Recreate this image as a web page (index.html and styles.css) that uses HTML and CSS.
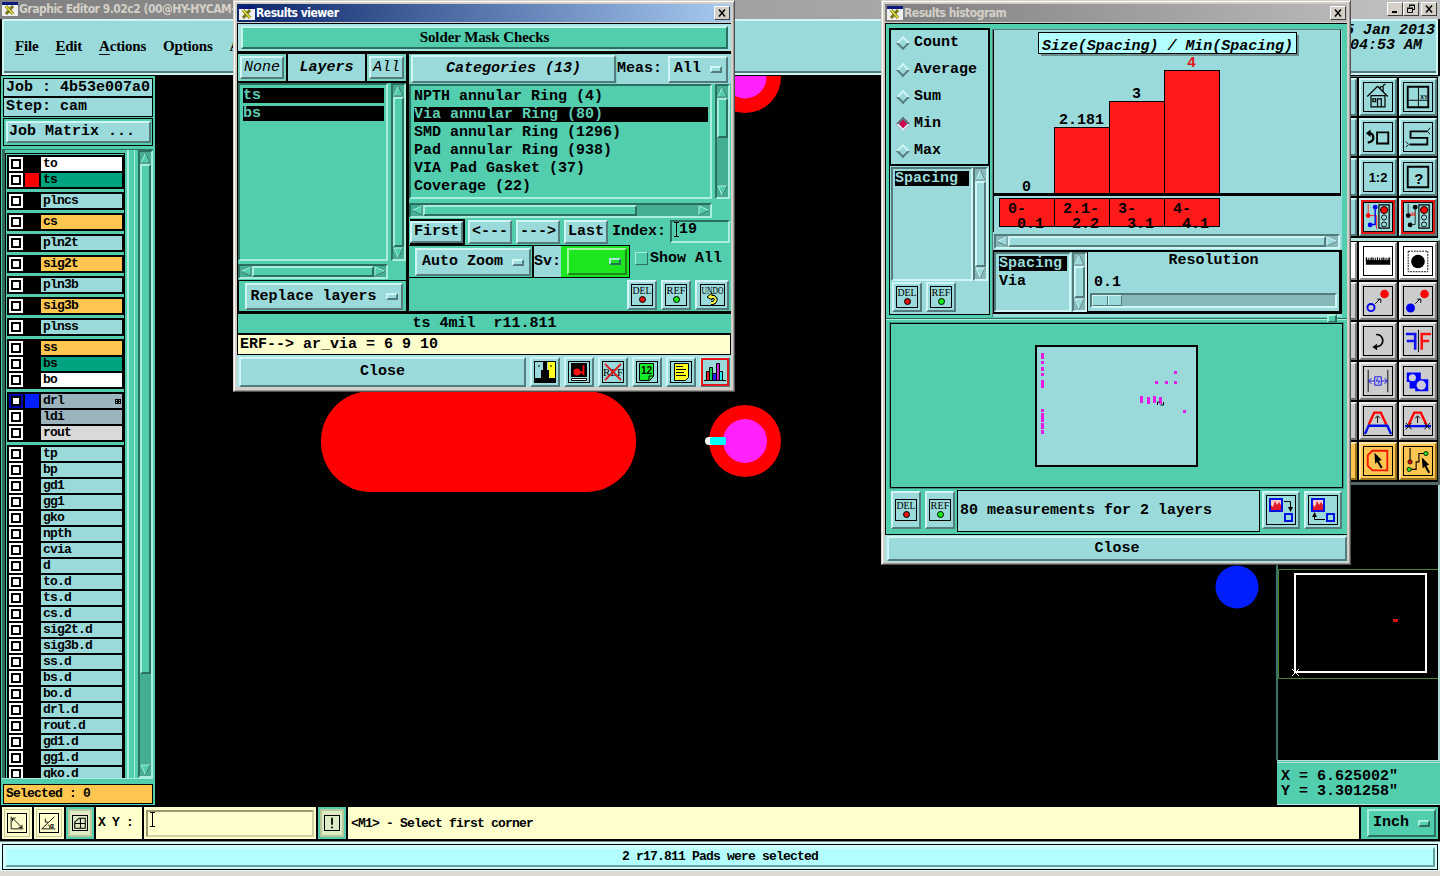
FILE: index.html
```html
<!DOCTYPE html>
<html lang="en">
  <head>
    <meta charset="UTF-8" />
    <meta name="viewport" content="width=device-width, initial-scale=1.0" />
    <title>Graphic Editor</title>
    <link rel="stylesheet" href="styles.css">
  </head>
  <body>
    <svg class="defs">
      <symbol id="app" viewBox="0 0 16 14">
        <rect width="16" height="14" fill="#eee" />
        <rect width="16" height="3" fill="#0a1a80" />
        <path d="M4 4l7 8M11 4l-7 8" stroke="#77771a" stroke-width="3" />
        <path d="M4 4l7 8" stroke="#e6e03c" stroke-width="1.5" />
      </symbol>
      <symbol id="cursor" viewBox="0 0 9 17">
        <path d="M0 0l8 8-3 1 4 7-2 1-4-7-2 2z" />
      </symbol>
    </svg>

    <div class="app">
      <div class="titlebar main-title">
        <svg class="app-icon"><use href="#app" /></svg>
        <span>Graphic Editor 9.02c2 (00@HY-HYCAM-</span>
        <div class="win-buttons">
          <i class="win-btn"><svg viewBox="0 0 12 10"><path d="M3 8h5" stroke="#000" stroke-width="2" /></svg></i>
          <i class="win-btn"><svg viewBox="0 0 12 10"><path d="M4.500 3V1.500h5v4H8M2.500 4.500h5v4h-5zM4 1h6M2 4h6" fill="none" stroke="#000" /></svg></i>
          <i class="win-btn gap"><svg viewBox="0 0 12 10"><path d="M3 1.500l6 7M9 1.500l-6 7" stroke="#000" stroke-width="1.500" /></svg></i>
        </div>
      </div>

      <div class="menubar">
        <nav>
          <span><u>F</u>ile</span>
          <span><u>E</u>dit</span>
          <span><u>A</u>ctions</span>
          <span>O<u>p</u>tions</span>
          <span>A</span>
        </nav>
        <div class="clock"><span>5 Jan 2013</span><span>04:53 AM&nbsp;</span></div>
      </div>

      <div class="main">
        <aside class="side">
          <div class="job-line">Job : 4b53e007a0</div>
          <div class="job-line step">Step: cam</div>
          <div class="matrix"><button class="btn">Job Matrix ...</button></div>
          <div class="layers">
            <div class="layer-list" id="layerList"></div>
            <div class="layer-rim"></div>
            <div class="vscroll">
              <svg class="arr" viewBox="0 0 11 12"><path d="M5.500 1L1 11h9z" fill="#52cdae" stroke="#a9eedd" /><path d="M5.500 1L10 11H1" fill="none" stroke="#2b705f" /></svg>
              <div class="thumb long"></div>
              <svg class="arr end" viewBox="0 0 11 12"><path d="M5.500 11L1 1h9z" fill="#52cdae" stroke="#a9eedd" /><path d="M10 1L5.500 11" stroke="#2b705f" /></svg>
            </div>
          </div>
          <div class="selected">Selected : 0</div>
        </aside>

        <div class="board">
          <svg viewBox="155 76 1121 730">
            <rect x="321" y="391" width="315" height="101" rx="50" fill="#f00" />
            <circle cx="745" cy="77" r="36" fill="#f00" />
            <circle cx="745" cy="77" r="21.500" fill="#f2f" />
            <circle cx="745" cy="441" r="36" fill="#f00" />
            <circle cx="745" cy="441" r="22" fill="#f2f" />
            <rect x="705" y="437" width="12" height="8" rx="4" fill="#fff" />
            <rect x="710" y="437" width="16" height="8" rx="2" fill="#0ff" />
            <circle cx="1237" cy="587" r="21.500" fill="#001eff" />
          </svg>
        </div>

        <aside class="tools">
          <div class="toolgrid">
            <div class="tool"></div>
            <div class="tool"><svg viewBox="0 0 30 30"><path d="M3.500 14.500l11-11 11 11M7.500 14v11.500h15V14M7 13.500h16M9.500 17h3v3h-3zM14.500 25v-8h4v8M17.500 6V4h3v6M20 3l3-2" fill="none" stroke="#000" stroke-width="1.300" /></svg></div>
            <div class="tool"><svg viewBox="0 0 30 30"><path d="M4 4h22v22H4z" fill="none" stroke="#000" stroke-width="2" /><path d="M15.500 4v22M4 18.500h22" stroke="#000" /><text x="17.500" y="17" font-size="6" class="sans">XY</text></svg></div>
            <div class="tool"></div>
            <div class="tool"><svg viewBox="0 0 30 30"><path d="M14 10h12v12H14z" fill="none" stroke="#000" stroke-width="2" /><path d="M5 11h2q3 1 3 5t-6 5" fill="none" stroke="#000" stroke-width="2.400" /><path d="M2 11l5-4v8z" /></svg></div>
            <div class="tool"><svg viewBox="0 0 30 30"><path d="M25 9H7v7h18v7H6" fill="none" stroke="#000" stroke-width="2" /><path d="M28 5l-3 4 3 3M2 20l3 3-3 3" fill="none" stroke="#000" /></svg></div>
            <div class="tool"></div>
            <div class="tool"><svg viewBox="0 0 30 30"><text x="5" y="20" font-size="14" font-weight="bold" textLength="20" lengthAdjust="spacingAndGlyphs" class="sans">1:2</text></svg></div>
            <div class="tool"><svg viewBox="0 0 30 30"><path d="M4 4h22v22H4z" fill="none" stroke="#000" stroke-width="2" /><text x="11" y="22" font-size="16" font-weight="bold" class="sans">?</text></svg></div>
            <div class="tool"></div>
            <div class="tool on"><svg viewBox="0 0 30 30"><path d="M4.500 1v12.500h9V28" fill="none" stroke="#f22" /><path d="M12 4v19H6" fill="none" stroke="#00e" stroke-width="1.500" /><circle cx="4.500" cy="13.500" r="2.500" fill="#f00" /><circle cx="12" cy="4.500" r="2.500" fill="#00e" /><circle cx="6.500" cy="23.500" r="2.500" fill="#00e" /><path d="M16 2h11v25H16z" fill="none" stroke="#000" stroke-width="1.300" /><circle cx="21.500" cy="7.500" r="3.800" fill="#f00" stroke="#000" /><circle cx="21.500" cy="15.500" r="2.700" fill="none" stroke="#000" /><circle cx="21.500" cy="23" r="2.700" fill="none" stroke="#000" /></svg></div>
            <div class="tool on"><svg viewBox="0 0 30 30"><path d="M4.500 1v12.500h3M12 4v19H6" fill="none" stroke="#222" /><path d="M7 13h5M7.500 10v3M9.500 10v3M11.500 10v3" stroke="#f22" /><circle cx="4.500" cy="13.500" r="2.500" /><circle cx="12" cy="4.500" r="2.500" /><circle cx="6.500" cy="23.500" r="2.500" /><path d="M16 2h11v25H16z" fill="none" stroke="#000" stroke-width="1.300" /><circle cx="21.500" cy="7.500" r="3.800" fill="#f00" stroke="#000" /><circle cx="21.500" cy="15.500" r="2.700" fill="none" stroke="#000" /><circle cx="21.500" cy="23" r="2.700" fill="none" stroke="#000" /></svg></div>
          </div>
          <div class="toolgrid second">
            <div class="tool white"></div>
            <div class="tool white"><svg viewBox="0 0 30 30"><path d="M2 14h26v5H2z" /><path d="M2 13h26" stroke="#000" stroke-width="3" stroke-dasharray="1 1" /><path d="M2.500 11v4M8.500 11v4M14.500 11v4M20.500 11v4M27.500 11v8" stroke="#000" /></svg></div>
            <div class="tool white"><svg viewBox="0 0 30 30"><rect x="4.500" y="4.500" width="21" height="22" fill="none" stroke="#000" stroke-dasharray="2 1" /><circle cx="15" cy="15.500" r="7.300" /></svg></div>
            <div class="tool gray"></div>
            <div class="tool gray"><svg viewBox="0 0 30 30"><circle cx="22" cy="7.500" r="4.600" fill="#f00" /><circle cx="7.500" cy="22" r="3.800" fill="none" stroke="#00e" stroke-width="2" /><path d="M12 18l5-5M14 13h4v4" fill="none" stroke="#000" /></svg></div>
            <div class="tool gray"><svg viewBox="0 0 30 30"><circle cx="22" cy="7.500" r="4.600" fill="#f00" /><circle cx="7" cy="22.500" r="4.800" fill="#00e" /><path d="M12 18l5-5M14 13h4v4" fill="none" stroke="#000" /></svg></div>
            <div class="tool gray"></div>
            <div class="tool gray"><svg viewBox="0 0 30 30"><path d="M13 8c8 0 9 9 4 12l-5 2" fill="none" stroke="#000" stroke-width="1.800" /><path d="M9 21.500l5-3.500v7z" /></svg></div>
            <div class="tool gray"><svg viewBox="0 0 30 30"><path d="M2 7.500h10v17M3 15h8" fill="none" stroke="#1010f0" stroke-width="2.800" /><path d="M15.500 3v24" stroke="#000" /><path d="M29 7.500h-10v17M18 15h9" fill="none" stroke="#f11" stroke-width="2.800" /></svg></div>
            <div class="tool gray"></div>
            <div class="tool gray"><svg viewBox="0 0 30 30"><path d="M4.500 3v24M25.500 3v24" stroke="#000" /><path d="M11.500 10.500h7v9h-7zM5 15h6M19 15h6M8 12l-3 3 3 3M22 12l3 3-3 3M15 12l-2 3h4l-2 3" fill="none" stroke="#1010f0" /></svg></div>
            <div class="tool gray"><svg viewBox="0 0 30 30"><path d="M3 6h15v7h8v13H12v-3H6v-7H3z" fill="#00f" /><circle cx="9" cy="11.500" r="3.800" fill="#ccd" /><circle cx="18.500" cy="19.500" r="5" fill="#ccd" /></svg></div>
            <div class="tool gray"></div>
            <div class="tool gray"><svg viewBox="0 0 30 30"><path d="M5 19L11 6h7l6 13" fill="none" stroke="#f00" stroke-width="2.600" /><path d="M1 29l4-9h20l4 9" fill="none" stroke="#0010e8" stroke-width="2.600" /><path d="M14.500 17v-7M12 12l2.500-2.500L17 12" fill="none" stroke="#000" /></svg></div>
            <div class="tool gray"><svg viewBox="0 0 30 30"><path d="M5 19L11 6h7l6 13" fill="none" stroke="#f00" stroke-width="2.600" /><path d="M1 20.500h28" stroke="#0010e8" stroke-width="2.600" /><path d="M14.500 17v-7M12 12l2.500-2.500L17 12M2 17l6 7M8 17l-6 7M22 17l6 7M28 17l-6 7" fill="none" stroke="#000" /></svg></div>
            <div class="tool orange"></div>
            <div class="tool orange"><svg viewBox="0 0 30 30"><path d="M9 4h16v21H9l-5-5V9z" fill="none" stroke="#f01800" stroke-width="2" /><use href="#cursor" x="11" y="6" width="9" height="17" /></svg></div>
            <div class="tool orange"><svg viewBox="0 0 30 30"><path d="M6.500 1v14M5 24h8v-8h3V7h6" fill="none" stroke="#000" stroke-width="1.200" /><circle cx="6.500" cy="16" r="2.300" fill="#d01010" stroke="#000" stroke-width=".8" /><circle cx="23.500" cy="7" r="2.300" fill="#1ee01e" stroke="#000" stroke-width=".8" /><circle cx="5.500" cy="24" r="2.300" fill="#1ee01e" stroke="#000" stroke-width=".8" /><use href="#cursor" x="19" y="11" width="9" height="17" /></svg></div>
          </div>
          <svg class="overview" viewBox="1276 485 164 275">
            <path d="M1277 485v275" stroke="#39756a" stroke-width="2" />
            <path d="M1438 569.500h-159.500v109H1438" fill="none" stroke="#47852a" />
            <rect x="1295" y="574" width="131" height="98" fill="none" stroke="#fff" stroke-width="2" />
            <path d="M1292 669l7 7M1299 669l-7 7" stroke="#fff" />
            <rect x="1393" y="619" width="5" height="3" fill="#d01414" />
            <path d="M1439 485v275" stroke="#a9d9d2" stroke-width="2" />
          </svg>
          <div class="coords"><span>X = 6.625002"</span><span>Y = 3.301258"</span></div>
        </aside>
      </div>

      <div class="command">
        <div class="cmd-btn"><svg viewBox="0 0 20 20"><path d="M3.500 3v13.500H17M5 4.500l10.500 10.500M5 8V4.500h3.500M15.500 12v3H12" fill="none" stroke="#000" /></svg></div>
        <div class="cmd-btn"><svg viewBox="0 0 20 20"><path d="M2 16.500L16 3M2 16.500h15M6 5v4h3M9 12q3 1 2 4" fill="none" stroke="#000" /><text x="11" y="15" font-size="7" font-weight="bold">α</text></svg></div>
        <div class="cmd-btn green"><svg viewBox="0 0 16 16"><path d="M2 7l5-4.500h7V14H2zM8.500 2v12M2 8.500h12" fill="none" stroke="#000" stroke-width="1.200" /></svg></div>
        <div class="xy">X Y :</div>
        <div class="entry"><div><svg class="ibeam" viewBox="0 0 5 15"><path d="M0 .5h5M2.500 0v15M0 14.500h5" stroke="#000" /></svg></div></div>
        <div class="cmd-btn green"><svg viewBox="0 0 16 16"><path d="M8 2v8M8 12v2" stroke="#000" stroke-width="2" /></svg></div>
        <div class="prompt">&lt;M1&gt; - Select first corner</div>
        <div class="units"><button class="btn teal">Inch<i class="opt"></i></button></div>
      </div>
      <div class="message"><div><span>2 r17.811 Pads were selected</span></div></div>
    </div>

    <div class="window viewer">
      <div class="titlebar active">
        <svg class="app-icon"><use href="#app" /></svg><span>Results viewer</span>
        <i class="win-btn gap"><svg viewBox="0 0 12 10"><path d="M3 1.500l6 7M9 1.500l-6 7" stroke="#000" stroke-width="1.500" /></svg></i>
      </div>
      <div class="viewer-head"><div>Solder Mask Checks</div></div>
      <div class="viewer-body">
        <div class="viewer-left">
          <div class="pick-row">
            <div class="pick"><button class="btn it thin">None</button></div>
            <div class="pick-title">Layers</div>
            <div class="pick"><button class="btn it thin">All</button></div>
          </div>
          <div class="list-area">
            <div class="list layers-picked"><div class="sel">ts</div><div class="sel">bs</div></div>
            <div class="vscroll">
              <svg class="arr" viewBox="0 0 11 12"><path d="M5.500 1L1 11h9z" fill="#52cdae" stroke="#a9eedd" /><path d="M5.500 1L10 11H1" fill="none" stroke="#2b705f" /></svg>
              <div class="thumb"></div>
              <svg class="arr end" viewBox="0 0 11 12"><path d="M5.500 11L1 1h9z" fill="#52cdae" stroke="#a9eedd" /><path d="M10 1L5.500 11" stroke="#2b705f" /></svg>
            </div>
          </div>
          <div class="hscroll left-h">
            <svg class="arr" viewBox="0 0 12 11"><path d="M1 5.500L11 1v9z" fill="#52cdae" stroke="#a9eedd" /><path d="M11 1v9L1 5.500" fill="none" stroke="#2b705f" /></svg>
            <div class="thumb"></div>
            <svg class="arr" viewBox="0 0 12 11"><path d="M11 5.500L1 1v9z" fill="#52cdae" stroke="#a9eedd" /><path d="M1 10l10-4.500" stroke="#2b705f" /></svg>
          </div>
          <div class="replace"><button class="btn">Replace layers<i class="opt"></i></button></div>
        </div>

        <div class="viewer-right">
          <div class="cat-row">
            <div class="cat"><button class="btn it">Categories (13)</button></div>
            <div class="meas">Meas:<button class="btn">All<i class="opt"></i></button></div>
          </div>
          <div class="list-area cats">
            <div class="list">
              <div>NPTH annular Ring (4)</div>
              <div class="sel">Via annular Ring (80)</div>
              <div>SMD annular Ring (1296)</div>
              <div>Pad annular Ring (938)</div>
              <div>VIA Pad Gasket (37)</div>
              <div>Coverage (22)</div>
            </div>
            <div class="vscroll">
              <svg class="arr" viewBox="0 0 11 12"><path d="M5.500 1L1 11h9z" fill="#52cdae" stroke="#a9eedd" /><path d="M5.500 1L10 11H1" fill="none" stroke="#2b705f" /></svg>
              <div class="thumb short"></div>
              <svg class="arr end" viewBox="0 0 11 12"><path d="M5.500 11L1 1h9z" fill="#52cdae" stroke="#a9eedd" /><path d="M10 1L5.500 11" stroke="#2b705f" /></svg>
            </div>
          </div>
          <div class="hscroll right-h">
            <svg class="arr" viewBox="0 0 12 11"><path d="M1 5.500L11 1v9z" fill="#52cdae" stroke="#a9eedd" /><path d="M11 1v9L1 5.500" fill="none" stroke="#2b705f" /></svg>
            <div class="thumb part"></div>
            <svg class="arr end" viewBox="0 0 12 11"><path d="M11 5.500L1 1v9z" fill="#52cdae" stroke="#a9eedd" /><path d="M1 10l10-4.500" stroke="#2b705f" /></svg>
          </div>
          <div class="nav-row">
            <div class="first"><button class="btn">First</button></div>
            <button class="btn">&lt;---</button>
            <button class="btn">---&gt;</button>
            <button class="btn">Last</button>
            <span>Index:</span>
            <div class="index"><svg class="ibeam" viewBox="0 0 5 15"><path d="M0 .5h5M2.500 0v15M0 14.500h5" stroke="#000" /></svg>19</div>
          </div>
          <div class="zoom-row">
            <div class="zoom-box"><button class="btn">Auto Zoom<i class="opt"></i></button></div>
            <div class="sv"><span>Sv:</span><div class="sv-green"><button class="btn"><i class="opt"></i></button></div></div>
            <i class="check"></i><span class="show">Show All</span>
          </div>
          <div class="edit-row">
            <div class="ibtn"><svg viewBox="0 0 22 22"><rect x=".5" y=".5" width="21" height="21" fill="none" stroke="#000" /><text x="1.500" y="9.500" textLength="19" lengthAdjust="spacingAndGlyphs" class="icon-text">DEL</text><circle cx="11.500" cy="15.500" r="3" fill="#e01010" stroke="#000" /></svg></div>
            <div class="ibtn"><svg viewBox="0 0 22 22"><rect x=".5" y=".5" width="21" height="21" fill="none" stroke="#000" /><text x="1.500" y="9.500" textLength="19" lengthAdjust="spacingAndGlyphs" class="icon-text">REF</text><circle cx="11.500" cy="15.500" r="3" fill="#14f014" stroke="#000" /></svg></div>
            <div class="ibtn"><svg viewBox="0 0 25 22"><rect x=".5" y=".5" width="24" height="21" fill="none" stroke="#000" /><text x="1.500" y="9.500" textLength="22" lengthAdjust="spacingAndGlyphs" class="icon-text">UNDO</text><path d="M10 13h4q4 3-1 6h-2" fill="none" stroke="#000" stroke-width="4" /><path d="M7 13l5-4v7z" fill="#f4f43a" stroke="#000" /><path d="M10 13h4q4 3-1 6h-2" fill="none" stroke="#f4f43a" stroke-width="2" /></svg></div>
          </div>
        </div>
      </div>
      <div class="viewer-status">ts 4mil&nbsp; r11.811</div>
      <div class="viewer-erf">ERF--&gt; ar_via = 6 9 10</div>
      <div class="viewer-foot">
        <button class="btn">Close</button>
        <div class="ibtn"><svg viewBox="0 0 22 22"><rect x=".5" y=".5" width="21" height="21" fill="#9bdada" stroke="#000" /><path d="M14 1h7v18h-7z" fill="#ff2" /><path d="M9 0h4v9h2v8h6v4H1v-4h6V9h2z" /><path d="M4 5h2M16 5h2" stroke="#000" /></svg></div>
        <div class="ibtn"><svg viewBox="0 0 22 22"><rect x=".5" y=".5" width="21" height="21" fill="none" stroke="#000" /><path d="M3 2h16v14H3z" /><circle cx="9" cy="11" r="3.500" fill="#f11" /><path d="M9 11.500h6M15.500 4v10" stroke="#f11" stroke-width="1.800" /><path d="M3.500 17.500h15v2h-15z" fill="#fff" stroke="#000" /></svg></div>
        <div class="ibtn"><svg viewBox="0 0 22 22"><rect x=".5" y=".5" width="21" height="21" fill="none" stroke="#000" /><text x="1" y="15" textLength="20" lengthAdjust="spacingAndGlyphs" class="icon-text">REF</text><path d="M3 3l16 16M19 3L3 19" stroke="#d82020" stroke-width="1.800" /></svg></div>
        <div class="ibtn"><svg viewBox="0 0 22 22"><rect x=".5" y=".5" width="21" height="21" fill="none" stroke="#000" /><path d="M3.500 2.500h14v13l-4 4h-10z" fill="#14ee28" stroke="#000" /><path d="M17 15h-4v4" fill="none" stroke="#000" /><text x="5" y="13" font-size="10" font-weight="bold" class="sans">12</text></svg></div>
        <div class="ibtn"><svg viewBox="0 0 22 22"><rect x=".5" y=".5" width="21" height="21" fill="none" stroke="#000" /><path d="M4.500 2.500h14v14l-3 3h-11z" fill="#ff2" stroke="#000" /><path d="M6 5.500h7M6 8.500h10M6 11.500h8M6 14.500h10" stroke="#000" /></svg></div>
        <div class="ibtn hot"><svg viewBox="0 0 22 22"><path d="M0 19.500h22" stroke="#000" /><path d="M2.500 10.500h3v9h-3z" fill="#e02020" stroke="#000" /><path d="M5.500 6.500h3v13h-3z" fill="#13d053" stroke="#000" /><path d="M8.500 12.500h4v7h-4z" fill="#22e" stroke="#000" /><path d="M12.500 2.500h3v17h-3z" fill="#c32bd0" stroke="#000" /><path d="M15.500 10.500h3v9h-3z" fill="#2ee" stroke="#000" /></svg></div>
      </div>
    </div>

    <div class="window histogram">
      <div class="titlebar inactive">
        <svg class="app-icon"><use href="#app" /></svg><span>Results histogram</span>
        <i class="win-btn gap"><svg viewBox="0 0 12 10"><path d="M3 1.500l6 7M9 1.500l-6 7" stroke="#000" stroke-width="1.500" /></svg></i>
      </div>
      <div class="hist-top">
        <div class="stats">
          <div class="radios">
            <label><i class="dia"></i>Count</label>
            <label><i class="dia"></i>Average</label>
            <label><i class="dia"></i>Sum</label>
            <label><i class="dia picked"></i>Min</label>
            <label><i class="dia"></i>Max</label>
          </div>
          <div class="stat-list">
            <div class="list-area">
              <div class="list"><div class="sel">Spacing</div></div>
              <div class="vscroll">
                <svg class="arr" viewBox="0 0 11 12"><path d="M5.500 1L1 11h9z" fill="#9bdada" stroke="#cff5f5" /><path d="M5.500 1L10 11H1" fill="none" stroke="#557c7c" /></svg>
                <div class="thumb"></div>
                <svg class="arr end" viewBox="0 0 11 12"><path d="M5.500 11L1 1h9z" fill="#9bdada" stroke="#cff5f5" /><path d="M10 1L5.500 11" stroke="#557c7c" /></svg>
              </div>
            </div>
            <div class="stat-btns">
              <div class="ibtn"><svg viewBox="0 0 22 22"><rect x=".5" y=".5" width="21" height="21" fill="none" stroke="#000" /><text x="1.500" y="9.500" textLength="19" lengthAdjust="spacingAndGlyphs" class="icon-text">DEL</text><circle cx="11.500" cy="15.500" r="3" fill="#e01010" stroke="#000" /></svg></div>
              <div class="ibtn"><svg viewBox="0 0 22 22"><rect x=".5" y=".5" width="21" height="21" fill="none" stroke="#000" /><text x="1.500" y="9.500" textLength="19" lengthAdjust="spacingAndGlyphs" class="icon-text">REF</text><circle cx="11.500" cy="15.500" r="3" fill="#14f014" stroke="#000" /></svg></div>
            </div>
          </div>
        </div>
        <div class="plots">
          <svg class="chart" viewBox="994 30 349 202">
            <rect x="994" y="29" width="349" height="203" fill="#9bdada" />
            <path d="M1341.500 30v164M994.500 232V30" fill="none" stroke="#000" />
            <rect x="1042" y="35" width="258" height="21" fill="#6b8f8f" />
            <rect x="1039.500" y="32.500" width="258" height="21" fill="#b3ffff" stroke="#000" />
            <text x="1043" y="50" class="mono it" textLength="251">Size(Spacing) / Min(Spacing)</text>
            <g fill="#ff1a1a" stroke="#000">
              <rect x="1055.500" y="127.500" width="55" height="67" />
              <rect x="1110.500" y="101.500" width="55" height="93" />
              <rect x="1165.500" y="70.500" width="55" height="124" />
              <rect x="1000.500" y="198.500" width="55" height="28" />
              <rect x="1055.500" y="198.500" width="55" height="28" />
              <rect x="1110.500" y="198.500" width="55" height="28" />
              <rect x="1165.500" y="198.500" width="55" height="28" />
            </g>
            <path d="M995 194.500h347" stroke="#000" stroke-width="3" />
            <g class="mono">
              <text x="1023" y="191">0</text>
              <text x="1060" y="124">2.181</text>
              <text x="1133" y="98">3</text>
              <text x="1188" y="67" fill="#e01a1a">4</text>
              <text x="1009" y="213">0-</text><text x="1018" y="228">0.1</text>
              <text x="1064" y="213">2.1-</text><text x="1073" y="228">2.2</text>
              <text x="1119" y="213">3-</text><text x="1128" y="228">3.1</text>
              <text x="1174" y="213">4-</text><text x="1183" y="228">4.1</text>
            </g>
          </svg>
          <div class="hscroll">
            <svg class="arr" viewBox="0 0 12 11"><path d="M1 5.500L11 1v9z" fill="#9bdada" stroke="#cff5f5" /><path d="M11 1v9L1 5.500" fill="none" stroke="#557c7c" /></svg>
            <div class="thumb"></div>
            <svg class="arr" viewBox="0 0 12 11"><path d="M11 5.500L1 1v9z" fill="#9bdada" stroke="#cff5f5" /><path d="M1 10l10-4.500" stroke="#557c7c" /></svg>
          </div>
          <div class="reso-row">
            <div class="list"><div class="sel">Spacing</div><div>Via</div></div>
            <div class="vscroll">
              <svg class="arr" viewBox="0 0 11 12"><path d="M5.500 1L1 11h9z" fill="#9bdada" stroke="#cff5f5" /><path d="M5.500 1L10 11H1" fill="none" stroke="#557c7c" /></svg>
              <div class="thumb"></div>
              <svg class="arr end" viewBox="0 0 11 12"><path d="M5.500 11L1 1h9z" fill="#9bdada" stroke="#cff5f5" /><path d="M10 1L5.500 11" stroke="#557c7c" /></svg>
            </div>
            <div class="reso">
              <div class="reso-title">Resolution</div>
              <div class="reso-val">0.1</div>
              <div class="slider"><i></i></div>
            </div>
          </div>
        </div>
      </div>
      <div class="sash"><i></i></div>
      <div class="map">
        <svg viewBox="891 325 451 161">
          <rect x="1036" y="346" width="161" height="120" fill="#9bdada" stroke="#000" stroke-width="2" />
          <path d="M1042.500 353v6M1042.500 361v3M1042.500 367v4M1042.500 373v3M1042.500 380v8M1042.500 409v3M1042.500 413v9M1042.500 423v6M1042.500 430v4M1141.500 396v7M1148.500 397v7M1154.500 396v7M1160.500 397v7M1156.500 381v3M1166.500 381v3M1175.500 381v3M1175.500 371v3M1184.500 410v3" stroke="#e41ce4" stroke-width="3" />
          <path d="M1157.500 405v-3h2M1163.500 402v3h-3" fill="none" stroke="#000" />
        </svg>
      </div>
      <div class="map-row">
        <div class="ibtn"><svg viewBox="0 0 22 22"><rect x=".5" y=".5" width="21" height="21" fill="none" stroke="#000" /><text x="1.500" y="9.500" textLength="19" lengthAdjust="spacingAndGlyphs" class="icon-text">DEL</text><circle cx="11.500" cy="15.500" r="3" fill="#e01010" stroke="#000" /></svg></div>
        <div class="ibtn"><svg viewBox="0 0 22 22"><rect x=".5" y=".5" width="21" height="21" fill="none" stroke="#000" /><text x="1.500" y="9.500" textLength="19" lengthAdjust="spacingAndGlyphs" class="icon-text">REF</text><circle cx="11.500" cy="15.500" r="3" fill="#14f014" stroke="#000" /></svg></div>
        <div class="count">80 measurements for 2 layers</div>
        <div class="ibtn big"><svg viewBox="0 0 30 30"><rect x=".5" y=".5" width="29" height="29" fill="none" stroke="#000" /><path d="M4 4h12v12H4z" fill="#fcc" stroke="#0010e0" stroke-width="2" /><path d="M5 15v-5l2 2 2-6 2 4 2-3 2 3v5z" fill="#e01a2a" /><path d="M19 19h7v7h-7z" fill="none" stroke="#0010e0" stroke-width="2" /><path d="M18 6.500h6.500V14" fill="none" stroke="#000" /><path d="M22 12h5l-2.500 5z" /></svg></div>
        <div class="ibtn big"><svg viewBox="0 0 30 30"><rect x=".5" y=".5" width="29" height="29" fill="none" stroke="#000" /><path d="M4 4h12v12H4z" fill="#fcc" stroke="#0010e0" stroke-width="2" /><path d="M5 15v-5l2 2 2-6 2 4 2-3 2 3v5z" fill="#e01a2a" /><path d="M19 19h7v7h-7z" fill="none" stroke="#0010e0" stroke-width="2" /><path d="M17 24.500H6.500V20" fill="none" stroke="#000" /><path d="M4 22h5l-2.500-5z" /></svg></div>
      </div>
      <div class="hist-foot"><button class="btn">Close</button></div>
    </div>

    <script src="layers.js"></script>
  </body>
</html>
```
FILE: layers.js
```js
// name:color of each layer, one array per group
var groups = [
  ["to:white", "ts:dark"],
  ["plncs:cyan"],
  ["cs:gold"],
  ["pln2t:cyan"],
  ["sig2t:gold"],
  ["pln3b:cyan"],
  ["sig3b:gold"],
  ["plnss:cyan"],
  ["ss:gold", "bs:dark", "bo:white"],
  ["drl:slate", "ldi:slate", "rout:silver"],
  ["tp", "bp", "gd1", "gg1", "gko", "npth", "cvia", "d", "to.d", "ts.d", "cs.d",
    "sig2t.d", "sig3b.d", "ss.d", "bs.d", "bo.d", "drl.d", "rout.d", "gd1.d", "gg1.d", "gko.d"]
];

var html = "";
groups.forEach(function (group) {
  html += '<div class="group">';
  group.forEach(function (item) {
    var parts = item.split(":");
    var name = parts[0];
    html += '<div class="layer row-' + name.replace(".", "-") + '">' +
      '<i class="box"></i><i class="swatch"></i>' +
      '<span class="name ' + (parts[1] || "cyan") + '">' + name +
      (name === "drl" ? '<i class="drill"></i>' : "") + "</span></div>";
  });
  html += "</div>";
});
document.getElementById("layerList").innerHTML = html;
```
FILE: styles.css
```css
* {
  box-sizing: border-box;
}

:root {
  --bg: #9bdada;
  --hi: #cff5f5;
  --lo: #557c7c;
  --trough: #86b8b8;
  --teal: #52cdae;
  --teal-hi: #a9eedd;
  --teal-lo: #2b705f;
  --cream: #ffffcd;
}

body {
  margin: 0;
  width: 1440px;
  height: 876px;
  overflow: hidden;
  background: #000;
  color: #000;
  font: bold 15px/18px "Liberation Mono", monospace;
}

svg {
  display: block;
}

i {
  font-style: normal;
}

.defs {
  position: absolute;
  width: 0;
  height: 0;
}

.icon-text {
  font: 11px "Liberation Serif", serif;
}

.sans {
  font-family: "Liberation Sans", sans-serif;
}

.mono {
  font: bold 15px "Liberation Mono", monospace;
}

.it {
  font-style: italic;
}

.app {
  display: grid;
  grid-template-rows: 19px 57px 730px 35px 35px;
  height: 876px;
}

/* title bars */
.titlebar {
  display: flex;
  align-items: center;
  height: 18px;
  font: bold 12px/18px "DejaVu Sans Condensed", "DejaVu Sans", sans-serif;
  letter-spacing: -0.5px;
  white-space: nowrap;
  color: #fff;
}

.main-title {
  height: 19px;
  padding: 0 3px 2px 2px;
  background: linear-gradient(90deg, #808080, #c0c0c0);
  color: #d4d0c8;
}

.app-icon {
  width: 16px;
  height: 14px;
  margin-right: 1px;
}

.win-buttons {
  display: flex;
  margin-left: auto;
}

.win-btn {
  width: 16px;
  height: 14px;
  padding: 1px;
  border: 1px solid;
  border-color: #fff #404040 #404040 #fff;
  background: #d4d0c8;
}

.win-btn svg {
  width: 12px;
  height: 10px;
}

.win-btn.gap {
  margin-left: 2px;
}

.titlebar.active,
.titlebar.inactive {
  padding: 0 1px 0 2px;
}

.active {
  background: linear-gradient(90deg, #0a246a, #a6caf0);
}

.inactive {
  background: linear-gradient(90deg, #808080, #b8b8b8);
  color: #d4d0c8;
}

.titlebar > .gap {
  margin-left: auto;
}

/* menu */
.menubar {
  display: flex;
  justify-content: space-between;
  margin: 0 2px 1px;
  border: 2px solid var(--hi);
  box-shadow: inset 0 -2px 0 var(--lo);
  background: var(--bg);
}

.menubar nav {
  display: flex;
  gap: 17px;
  padding: 16px 0 0 11px;
  font: bold 15px/18px "Liberation Serif", serif;
  letter-spacing: -0.2px;
}

.menubar u {
  text-underline-offset: 3px;
}

.clock {
  display: flex;
  flex-direction: column;
  align-items: flex-end;
  padding: 2px 1px 0 0;
  font-style: italic;
  line-height: 15px;
}

.clock span:last-child {
  margin-right: 4px;
}

.main {
  display: flex;
  background: #000;
}

/* left side */
.side {
  width: 155px;
  height: 729px;
  padding: 2px 2px 0 3px;
  border-left: 1px solid #000;
  background: var(--teal);
}

.side > * {
  margin-left: -1px;
}

.job-line {
  height: 19px;
  padding-left: 2px;
  border: 1px solid #000;
  background: var(--bg);
  line-height: 18px;
}

.job-line.step {
  height: 20px;
}

.matrix {
  height: 28px;
  margin-top: 1px;
  padding: 2px;
  border: 1px solid #000;
}

.btn {
  display: flex;
  align-items: center;
  justify-content: center;
  padding: 0;
  border: 2px solid;
  border-color: var(--hi) var(--lo) var(--lo) var(--hi);
  border-radius: 0;
  background: var(--bg);
  color: #000;
  font: bold 15px/18px "Liberation Mono", monospace;
  white-space: nowrap;
}

.btn.it {
  font-style: italic;
}

.btn.thin {
  font-weight: normal;
}

.btn.teal {
  border-color: var(--teal-hi) var(--teal-lo) var(--teal-lo) var(--teal-hi);
  background: var(--teal);
}

.matrix .btn {
  width: 145px;
  height: 22px;
  justify-content: flex-start;
  padding-left: 1px;
}

.opt {
  width: 12px;
  height: 7px;
  margin-left: 9px;
  border: 2px solid;
  border-color: var(--hi) var(--lo) var(--lo) var(--hi);
}

.layers {
  display: flex;
  height: 630px;
  margin: 3px 0 0 -2px;
  border-top: 1px solid var(--teal-lo);
  border-bottom: 1px solid var(--teal-hi);
}

.side .layers {
  background: linear-gradient(90deg, #31685b 3px, var(--teal) 3px);
}

.layer-list {
  width: 122px;
  height: 625px;
  margin: 3px 0 0 3px;
  padding: 1px;
  overflow: hidden;
  border: 1px solid #000;
  border-bottom: 0;
}

.group {
  width: 117px;
  margin-bottom: 3px;
  padding: 1px 2px;
  background: #000;
}

.layer {
  display: flex;
  gap: 2px;
  height: 16px;
  padding: 1px 0;
}

.box {
  width: 14px;
  height: 14px;
  border: 2px solid #fff;
  background: #fff;
  box-shadow: inset 0 0 0 2px #000;
}

.swatch {
  width: 14px;
  height: 14px;
}

.name {
  display: flex;
  align-items: center;
  justify-content: space-between;
  width: 81px;
  height: 14px;
  padding: 0 1px 0 2px;
  font-size: 13px;
  line-height: 14px;
  letter-spacing: -0.8px;
}

.drill {
  width: 6px;
  height: 5px;
  border: 1px solid #000;
  background: linear-gradient(90deg, transparent 1px, #000 1px, #000 3px, transparent 3px), linear-gradient(transparent 1px, #000 1px, #000 2px, transparent 2px);
}

.name.white { background: #fff; }
.name.dark { background: #00a57f; }
.name.cyan { background: var(--bg); }
.name.gold { background: #ffc650; }
.name.slate { background: #9bb4be; }
.name.silver { background: #d9d9d9; }

.row-ts .swatch {
  background: #f00;
}

.row-drl .swatch {
  background: #001eff;
}

.row-drl .box {
  border-color: #0000a8;
}

.layer-rim {
  width: 8px;
  margin: 0 3px 0 2px;
  border-left: 2px solid var(--teal-hi);
  border-right: 1px solid var(--teal-hi);
}

/* scrollbars */
.vscroll {
  display: flex;
  flex: none;
  flex-direction: column;
  width: 15px;
  border: 2px solid;
  border-color: var(--teal-lo) var(--teal-hi) var(--teal-hi) var(--teal-lo);
  background: #45ad94;
}

.vscroll .arr {
  width: 11px;
  height: 12px;
  flex: none;
}

.vscroll .end {
  margin-top: auto;
}

.thumb {
  flex: 1;
  border: 2px solid;
  border-color: var(--teal-hi) var(--teal-lo) var(--teal-lo) var(--teal-hi);
  background: var(--teal);
}

.thumb.long {
  flex: none;
  height: 510px;
}

.hscroll {
  display: flex;
  height: 15px;
  border: 2px solid;
  border-color: var(--teal-lo) var(--teal-hi) var(--teal-hi) var(--teal-lo);
  background: #45ad94;
}

.hscroll .arr {
  width: 12px;
  height: 11px;
  flex: none;
}

.hscroll .end {
  margin-left: auto;
}

.selected {
  height: 20px;
  margin-top: 5px;
  padding-left: 2px;
  border: 1px solid #000;
  background: #ffc650;
  font-size: 13px;
  line-height: 18px;
  letter-spacing: -0.8px;
}

.board {
  width: 1121px;
}

/* right side */
.tools {
  width: 164px;
}

.toolgrid {
  display: grid;
  grid-template-columns: repeat(3, 38px);
  grid-auto-rows: 38px;
  justify-content: end;
  gap: 2px;
  height: 164px;
  padding: 1px 1px 2px 0;
  border-top: 1px solid var(--lo);
  border-right: 2px solid #b5e2dc;
  border-bottom: 2px solid #b5e2dc;
}

.toolgrid.second {
  height: 245px;
  border-top: 1px solid #b5e2dc;
  border-bottom: 3px solid #566;
  border-right-color: #506058;
}

.tool {
  padding: 2px;
  border: 2px solid;
  border-color: var(--hi) var(--lo) var(--lo) var(--hi);
  background: var(--bg);
}

.tool svg {
  width: 30px;
  height: 30px;
  border: 1px solid #000;
}

.tool.on svg {
  outline: 2px solid #e31919;
}

.tool.white {
  border-color: #fff #8c8c8c #8c8c8c #fff;
  background: #fff;
}

.tool.gray {
  border-color: #eee #757575 #757575 #eee;
  background: #ccc;
}

.tool.orange {
  border-color: #ffe4a6 #96701c #96701c #ffe4a6;
  background: #fec650;
}

.overview {
  width: 164px;
  height: 275px;
}

.coords {
  display: flex;
  flex-direction: column;
  height: 45px;
  margin-left: 1px;
  padding: 6px 0 0 4px;
  border-top: 3px double #b5e2dc;
  border-bottom: 1px solid #b5e2dc;
  background: var(--teal);
  line-height: 15px;
}

/* command line */
.command {
  display: flex;
  gap: 2px;
  padding: 1px 2px 2px;
  background: #000;
  font-size: 13px;
  letter-spacing: -0.8px;
}

.cmd-btn {
  flex: none;
  width: 30px;
  height: 32px;
  padding: 3px;
  border: 2px solid var(--cream);
  background: var(--cream);
  outline: 1px solid #c9c99b;
  outline-offset: -3px;
}

.cmd-btn svg {
  width: 20px;
  height: 20px;
  margin-top: 1px;
  border: 1px solid #000;
}

.cmd-btn.green {
  width: 28px;
  padding: 4px;
  border: 2px solid var(--teal);
  outline: 2px solid #b9c99b;
  outline-offset: -4px;
  background: #dcecc4;
}

.cmd-btn.green svg {
  width: 16px;
  height: 16px;
  margin-top: 2px;
}

.xy {
  width: 46px;
  padding-left: 2px;
  background: var(--cream);
  line-height: 32px;
}

.entry {
  width: 172px;
  padding: 3px 2px 2px;
  background: var(--cream);
}

.entry div {
  height: 27px;
  padding: 0 0 0 2px;
  border: 2px solid;
  border-color: #9c9c74 #d0d0a4 #d0d0a4 #9c9c74;
}

.ibeam {
  width: 5px;
  height: 15px;
}

.prompt {
  flex: 1;
  padding-left: 3px;
  background: var(--cream);
  line-height: 33px;
}

.units {
  width: 77px;
  padding: 2px 2px 2px 6px;
  background: var(--teal);
}

.units .btn {
  width: 69px;
  height: 28px;
}

.units .opt,
.zoom-row .sv-green .opt {
  border-color: var(--teal-hi) var(--teal-lo) var(--teal-lo) var(--teal-hi);
}

.message {
  padding: 2px 2px 0;
  border-top: 1px solid #788;
  border-bottom: 5px solid #ddd9d2;
  background: #dff;
}

.message div {
  height: 26px;
  padding: 2px;
  border: 1px solid #000;
  background: #cffefe;
}

.message span {
  display: block;
  height: 20px;
  border: 2px solid;
  border-color: #cffefe #64a0a0 #64a0a0 #cffefe;
  background: #b3ffff;
  font-size: 13px;
  line-height: 16px;
  letter-spacing: -0.8px;
  text-align: center;
}

/* floating windows */
.window {
  position: absolute;
  top: 0;
  padding: 3px;
  border: 1px solid;
  border-color: #d4d0c8 #505050 #505050 #d4d0c8;
  background: #d4d0c8;
  box-shadow: inset 1px 1px 0 #fff, inset -1px -1px 0 #999;
}

.window.viewer {
  left: 233px;
  width: 502px;
  height: 392px;
}

.viewer-head {
  height: 31px;
  margin-top: 1px;
  padding: 2px 3px 2px;
  border-top: 1px solid #000;
  border-bottom: 3px solid #000;
  border-left: 1px solid #000;
  background: #a9e2e2;
}

.viewer-head div {
  height: 23px;
  border: 2px solid;
  border-color: #c5f5ea var(--teal-lo) var(--teal-lo) #c5f5ea;
  background: var(--teal);
  font: bold 15px/19px "Liberation Serif", serif;
  text-align: center;
  letter-spacing: -0.1px;
}

.viewer-body {
  display: flex;
  height: 260px;
  padding-left: 1px;
  border-bottom: 3px solid #000;
  background: #000;
}

.viewer-left {
  width: 168px;
  background: var(--teal);
}

.pick-row {
  display: flex;
  gap: 2px;
  height: 29px;
  padding-bottom: 2px;
  background: #000;
}

.pick {
  padding: 2px;
  background: #7ad4c2;
}

.pick .btn {
  height: 23px;
  width: 44px;
}

.pick:last-child .btn {
  width: 35px;
}

.pick-title {
  flex: 1;
  background: var(--bg);
  font-style: italic;
  line-height: 28px;
  text-align: center;
}

.list-area {
  display: flex;
  justify-content: space-between;
}

.list {
  padding: 2px 2px 0 3px;
  border: 2px solid;
  border-color: var(--teal-lo) var(--teal-hi) var(--teal-hi) var(--teal-lo);
  background: var(--teal);
  white-space: nowrap;
}

.list div {
  height: 15px;
  margin-bottom: 3px;
  line-height: 16px;
}

.list .sel {
  background: #000;
  color: #5fcfb4;
}

.layers-picked {
  width: 150px;
  height: 178px;
  padding-top: 3px;
}

.viewer-left .vscroll {
  height: 178px;
}

.left-h {
  width: 150px;
  margin-top: 3px;
}

.replace {
  height: 32px;
  margin-top: 1px;
  padding: 2px 2px 2px 6px;
  border-top: 1px solid #000;
  border-left: 1px solid #000;
  border-bottom: 1px solid #000;
}

.replace .btn {
  width: 158px;
  height: 27px;
}

.viewer-right {
  width: 322px;
  margin-left: 3px;
  background: var(--teal);
}

.cat-row {
  display: flex;
  height: 30px;
  background: var(--bg);
}

.cat {
  width: 208px;
  padding: 1px 2px;
  background: #7ad4c2;
}

.cat .btn {
  width: 205px;
  height: 28px;
}

.meas {
  display: flex;
  align-items: center;
  gap: 6px;
}

.meas .btn {
  width: 60px;
  height: 27px;
}

.cats {
  height: 115px;
}

.cats .list {
  width: 303px;
  padding: 3px 2px 0 3px;
}

.cats .vscroll {
  margin-right: 1px;
}

.thumb.short {
  flex: none;
  height: 40px;
}

.right-h {
  width: 303px;
  margin-top: 4px;
}

.thumb.part {
  flex: none;
  width: 214px;
}

.nav-row {
  display: flex;
  height: 27px;
  padding: 2px 0 0 1px;
}

.nav-row .btn {
  width: 44px;
  height: 24px;
  margin-right: 4px;
}

.first {
  height: 26px;
  margin: -1px 3px 0 0;
  border: 2px solid #000;
  border-left-width: 0;
}

.nav-row .first .btn {
  width: 53px;
  height: 22px;
  margin: 0;
}

.nav-row span {
  line-height: 23px;
}

.index {
  display: flex;
  width: 60px;
  height: 23px;
  margin-left: 4px;
  padding-left: 2px;
  border: 2px solid;
  border-color: var(--teal-lo) var(--teal-hi) var(--teal-hi) var(--teal-lo);
  line-height: 16px;
}

.zoom-row {
  display: flex;
  height: 33px;
}

.zoom-box {
  width: 124px;
  padding: 2px 1px 2px 6px;
  border: 1px solid #000;
  border-left: 0;
}

.zoom-box .btn {
  width: 116px;
  height: 28px;
}

.sv {
  display: flex;
  border: 1px solid #000;
  background: var(--bg);
}

.sv span {
  width: 27px;
  line-height: 31px;
}

.sv-green {
  width: 68px;
  padding: 2px 1px 2px 6px;
  background: #1ee61e;
}

.sv-green .btn {
  width: 60px;
  height: 27px;
  padding-left: 26px;
  border-color: #9ff79f #178a17 #178a17 #9ff79f;
  background: #1ee61e;
}

.check {
  width: 13px;
  height: 13px;
  margin: 7px 2px 0 5px;
  border: 1px solid;
  border-color: var(--teal-hi) var(--teal-lo) var(--teal-lo) var(--teal-hi);
}

.show {
  margin-top: 5px;
}

.edit-row {
  display: flex;
  justify-content: flex-end;
  gap: 4px;
  padding: 2px 2px 0 0;
}

.ibtn {
  display: flex;
  flex: none;
  align-items: center;
  justify-content: center;
  width: 30px;
  height: 30px;
  border: 2px solid;
  border-color: var(--hi) var(--lo) var(--lo) var(--hi);
  background: var(--bg);
}

.ibtn svg {
  width: 22px;
  height: 22px;
}

.edit-row .ibtn:last-child {
  width: 34px;
}

.edit-row .ibtn:last-child svg {
  width: 25px;
}

.ibtn.hot {
  outline: 2px solid #e31919;
  outline-offset: -3px;
}

.viewer-status {
  height: 19px;
  border-left: 1px solid #000;
  background: var(--teal);
  line-height: 19px;
  text-align: center;
}

.viewer-erf {
  height: 22px;
  padding-left: 2px;
  border: 1px solid #000;
  border-top-width: 2px;
  background: var(--cream);
  line-height: 20px;
}

.viewer-foot {
  display: flex;
  gap: 4px;
  height: 32px;
  padding: 2px 1px 0 2px;
  background: #a9e2e2;
}

.viewer-foot .btn {
  flex: 1;
  height: 30px;
}

/* histogram window */
.window.histogram {
  left: 881px;
  width: 470px;
  height: 565px;
}

.hist-top {
  display: flex;
  height: 294px;
  margin-top: 1px;
  padding: 4px 5px 0 3px;
  border-top: 1px solid #000;
  border-left: 1px solid #000;
  background: var(--teal);
}

.hist-top .vscroll,
.hist-top .hscroll,
.hist-top .list {
  border-color: var(--lo) var(--hi) var(--hi) var(--lo);
  background: var(--bg);
}

.hist-top .vscroll,
.hist-top .hscroll {
  background: var(--trough);
}

.hist-top .thumb {
  border-color: var(--hi) var(--lo) var(--lo) var(--hi);
  background: var(--bg);
}

.hist-top .sel {
  color: var(--bg);
}

.stats {
  width: 103px;
}

.radios {
  height: 138px;
  border: 2px solid #000;
  background: var(--bg);
}

.radios label {
  display: flex;
  align-items: center;
  height: 27px;
  padding: 0 0 2px 7px;
}

.dia {
  width: 10px;
  height: 10px;
  margin: 1px 6px 0 0;
  border: 2px solid;
  border-color: var(--hi) var(--lo) var(--lo) var(--hi);
  transform: rotate(45deg);
}

.dia.picked {
  border-color: var(--lo) var(--hi) var(--hi) var(--lo);
  background: #d0004c;
}

.stat-list {
  height: 149px;
  padding: 1px 1px 0;
  border: 1px solid #000;
  border-top: 0;
  background: var(--bg);
}

.stat-list .list {
  width: 82px;
  height: 114px;
  padding-left: 2px;
}

.stat-btns {
  display: flex;
  gap: 4px;
  padding: 1px 0 0 1px;
}

.plots {
  width: 350px;
  margin: 1px 0 0 2px;
  border-top: 1px solid var(--lo);
  border-left: 1px solid var(--lo);
  background: var(--bg);
}

.chart {
  width: 349px;
  height: 202px;
}

.plots .hscroll {
  width: 346px;
  margin: 2px 0 0 1px;
}

.reso-row {
  display: flex;
  height: 64px;
  margin-top: 1px;
  border: 2px solid #000;
  border-left-width: 1px;
  border-right: 3px solid #000;
}

.reso-row .list {
  width: 77px;
}

.reso-row .vscroll {
  margin-left: 1px;
}

.reso {
  flex: 1;
  padding: 0 2px;
  border-left: 1px solid #000;
  border-bottom: 1px solid #000;
}

.reso-title {
  line-height: 17px;
  text-align: center;
}

.reso-val {
  margin-top: 5px;
  padding-left: 4px;
}

.slider {
  height: 15px;
  margin-top: 1px;
  border: 2px solid;
  border-color: var(--lo) var(--hi) var(--hi) var(--lo);
  background: var(--trough);
}

.slider i {
  display: block;
  width: 30px;
  height: 11px;
  border: 1px solid;
  border-color: var(--hi) var(--lo) var(--lo) var(--hi);
  background: linear-gradient(90deg, var(--bg) 14px, var(--lo) 14px, var(--lo) 15px, var(--hi) 15px, var(--hi) 16px, var(--bg) 16px);
}

.sash {
  display: flex;
  height: 6px;
  border-left: 1px solid #000;
  background: linear-gradient(var(--teal) 1px, #2b705f 1px, #2b705f 2px, #a9eedd 2px, #a9eedd 3px, var(--teal) 3px);
}

.sash i {
  flex: none;
  width: 10px;
  height: 9px;
  margin: -3px 0 0 441px;
  border: 2px solid;
  border-color: var(--teal-hi) var(--teal-lo) var(--teal-lo) var(--teal-hi);
  background: var(--teal);
}

.map {
  height: 165px;
  padding: 0 5px 0 4px;
  border-left: 1px solid #000;
  background: var(--teal);
}

.map svg {
  width: 453px;
  height: 165px;
  border: 1px solid #000;
  outline: 1px solid #3d9480;
  background: var(--teal);
}

.map-row {
  display: flex;
  height: 47px;
  padding: 3px 0 0 5px;
  border-left: 1px solid #000;
  border-bottom: 1px solid #000;
  background: var(--teal);
}

.map-row .ibtn {
  height: 38px;
  margin-right: 4px;
}

.map-row .ibtn:nth-child(2) {
  margin-right: 2px;
}

.count {
  width: 303px;
  height: 42px;
  margin: -1px 2px 0 0;
  padding-left: 2px;
  border: 1px solid #000;
  background: var(--bg);
  line-height: 39px;
}

.ibtn.big {
  width: 38px;
}

.ibtn.big svg {
  width: 30px;
  height: 30px;
}

.hist-foot {
  height: 27px;
  padding: 1px 2px;
  background: #a9e2e2;
}

.hist-foot .btn {
  width: 460px;
  height: 25px;
}
```
